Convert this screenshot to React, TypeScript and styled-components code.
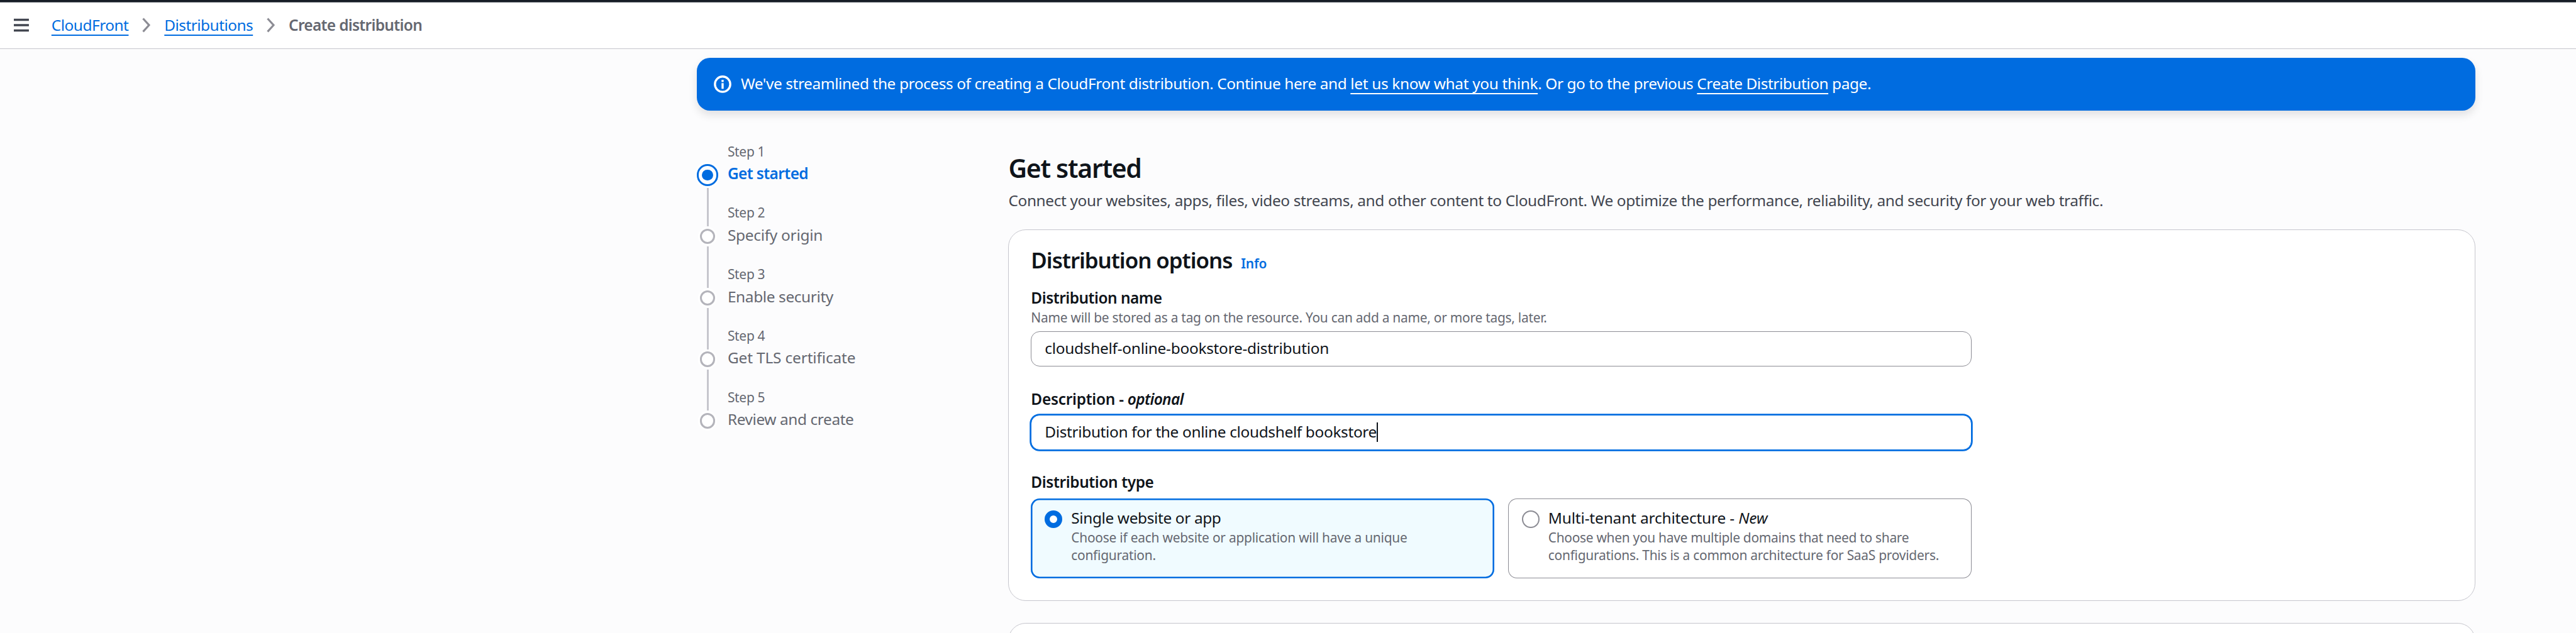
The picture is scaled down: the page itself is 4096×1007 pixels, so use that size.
import React from "react";
import styled, { createGlobalStyle, css } from "styled-components";

const SCALE = 0.9978;
const u = (n: number) => `${(n * SCALE).toFixed(2)}px`;

const color = {
  text: "#0f141a",
  secondary: "#424650",
  muted: "#656871",
  link: "#006ce0",
  page: "#fcfcfd",
  divider: "#c6c6cd",
  control: "#8c8c94",
  marker: "#b4b4bb",
  selected: "#f0fbff",
  nav: "#161d26",
};

const GlobalStyle = createGlobalStyle`
  *, *::before, *::after { box-sizing: border-box; }
  html, body { margin: 0; height: 1007px; overflow: hidden; background: ${color.page}; }
  body { font-family: "Noto Sans", "Open Sans", sans-serif; color: ${color.text}; }
  h1, h2, p { margin: 0; font-weight: inherit; }
`;

type Track = { $track?: number };
const track = css<Track>`letter-spacing: ${(p) => u(p.$track ?? -0.38)};`;

const bodyText = css<Track>`
  font-size: ${u(24.5)};
  line-height: ${u(35)};
  white-space: nowrap;
  ${track}
`;
const smallText = css<Track>`
  font-size: ${u(21)};
  line-height: ${u(28)};
  white-space: nowrap;
  letter-spacing: ${(p) => u(p.$track ?? -0.26)};
`;

const Shell = styled.div`
  display: flex;
  flex-direction: column;
  width: 4096px;
  height: 1007px;
  overflow: hidden;
`;
const NavEdge = styled.div`
  flex: none;
  height: 4px;
  background: ${color.nav};
  border-bottom: 1px solid #5a5f66;
`;
const Header = styled.header`
  flex: none;
  display: flex;
  align-items: flex-start;
  gap: ${u(36)};
  height: ${u(74)};
  padding: ${u(19)} 0 0 ${u(22)};
  background: #fff;
  border-bottom: 1px solid ${color.divider};
`;
const HeaderIcon = styled.svg`
  flex: none;
  display: block;
  height: ${u(24)};
  margin-top: ${u(5)};
`;
const Crumbs = styled.nav`
  display: flex;
  gap: ${u(22)};
`;
const underline = css`
  text-decoration: underline;
  text-decoration-thickness: 2px;
  text-underline-offset: ${u(6)};
  text-decoration-skip-ink: none;
`;
const Crumb = styled.a<Track>`
  ${bodyText}
  color: ${color.link};
  ${underline}
`;
const CurrentCrumb = styled.span<Track>`
  ${bodyText}
  font-weight: 650;
  color: ${color.muted};
`;

const Page = styled.main`
  flex: 1;
  display: flex;
  flex-direction: column;
  width: ${u(2835)};
  margin-left: ${u(1110)};
  padding-top: ${u(14)};
`;
const Banner = styled.div`
  flex: none;
  display: flex;
  gap: ${u(14.5)};
  height: ${u(84)};
  padding: ${u(24)} 0 0 ${u(28)};
  border-radius: ${u(21)};
  background: ${color.link};
  color: #fff;
  box-shadow: 0 7px 14px rgba(0, 7, 22, 0.11);
`;
const BannerIcon = styled.svg`
  flex: none;
  width: ${u(28)};
  height: ${u(28)};
  margin-top: ${u(4)};
`;
const BannerText = styled.p<Track>`
  ${bodyText}
`;
const BannerLink = styled.a<Track>`
  color: inherit;
  ${track}
  ${underline}
`;

const Columns = styled.div`
  flex: 1;
  display: flex;
`;
const Steps = styled.ol`
  flex: none;
  width: ${u(497)};
  margin: 0;
  padding: ${u(51)} 0 0;
  list-style: none;
`;
const Step = styled.li`
  display: flex;
  gap: ${u(14.5)};
  height: ${u(98)};
`;
const Rail = styled.div`
  display: flex;
  flex-direction: column;
  align-items: center;
  width: ${u(35)};
`;
const Line = styled.span<{ $height?: number; $hidden?: boolean }>`
  width: 3px;
  background: ${(p) => (p.$hidden ? "transparent" : color.divider)};
  ${(p) => (p.$height ? `flex: none; height: ${u(p.$height)};` : "flex: 1;")}
`;
const MarkerSlot = styled.span<{ $active?: boolean }>`
  flex: none;
  display: grid;
  place-items: center;
  height: ${(p) => u(p.$active ? 42 : 32)};
`;
const Marker = styled.span<{ $active?: boolean }>`
  display: grid;
  place-items: center;
  width: ${(p) => u(p.$active ? 35 : 24.6)};
  height: ${(p) => u(p.$active ? 35 : 24.6)};
  border: ${(p) => (p.$active ? `3px solid ${color.link}` : `3.4px solid ${color.marker}`)};
  border-radius: 50%;
  background: #fff;
  box-shadow: 0 0 0 3px #fff;
`;
const MarkerDot = styled.span`
  width: ${u(17.5)};
  height: ${u(17.5)};
  border-radius: 50%;
  background: ${color.link};
`;
const StepBody = styled.div`
  display: flex;
  flex-direction: column;
  gap: ${u(3.5)};
  padding-top: ${u(1.2)};
`;
const StepLabel = styled.span<Track>`
  ${smallText}
  color: ${color.muted};
`;
const StepName = styled.span<Track & { $active?: boolean }>`
  ${bodyText}
  color: ${(p) => (p.$active ? color.link : color.muted)};
  font-weight: ${(p) => (p.$active ? 650 : 400)};
`;

const Content = styled.section`
  flex: 1;
  display: flex;
  flex-direction: column;
  padding-top: ${u(65.5)};
`;
const Title = styled.h1`
  font-size: ${u(41)};
  line-height: ${u(52.5)};
  font-weight: 650;
  letter-spacing: ${u(-1.3)};
`;
const Subtitle = styled.p<Track>`
  ${bodyText}
  margin-top: ${u(9)};
  color: ${color.secondary};
`;
const Card = styled.div`
  flex: none;
  height: ${u(592.5)};
  margin-top: ${u(28)};
  padding: ${u(27)} ${u(35)} 0;
  border: 1px solid ${color.divider};
  border-radius: ${u(28)};
  background: #fff;
`;
const NextCard = styled(Card)`
  height: ${u(120)};
  margin-top: ${u(34.5)};
`;
const CardHead = styled.div`
  display: flex;
  align-items: baseline;
  gap: ${u(14)};
`;
const CardTitle = styled.h2`
  font-size: ${u(35)};
  line-height: ${u(42)};
  font-weight: 650;
  letter-spacing: ${u(-1.07)};
`;
const InfoLink = styled.a<Track>`
  ${smallText}
  font-weight: 600;
  color: ${color.link};
`;
const Field = styled.div<{ $gap: number }>`
  display: flex;
  flex-direction: column;
  width: ${u(1499)};
  margin-top: ${(p) => u(p.$gap)};
`;
const Label = styled.label<Track>`
  ${bodyText}
  font-weight: 620;
`;
const Optional = styled.em<Track>`
  ${track}
`;
const Hint = styled.span<Track>`
  ${smallText}
  color: ${color.muted};
`;
const InputBox = styled.div<Track & { $focus?: boolean }>`
  ${bodyText}
  display: flex;
  align-items: center;
  height: ${u(56)};
  margin-top: ${u(7)};
  padding-left: ${u(21)};
  border: 1px solid ${(p) => (p.$focus ? color.link : color.control)};
  border-radius: ${u(14)};
  background: #fff;
  box-shadow: ${(p) => (p.$focus ? `0 0 0 1.75px ${color.link}` : "none")};
`;
const Caret = styled.span`
  width: 2px;
  height: ${u(31)};
  background: ${color.text};
`;
const Tiles = styled.div`
  display: grid;
  grid-template-columns: 1fr 1fr;
  gap: ${u(21.5)};
  margin-top: ${u(7.5)};
`;
const Tile = styled.div<{ $selected?: boolean }>`
  display: flex;
  gap: ${u(14.2)};
  height: ${u(128)};
  padding: ${u(14.5)} ${u(21.8)};
  border-radius: ${u(14)};
  background: ${(p) => (p.$selected ? color.selected : "#fff")};
  box-shadow: inset 0 0 0 ${(p) => (p.$selected ? `2.6px ${color.link}` : `1px ${color.control}`)};
`;
const Radio = styled.span<{ $checked?: boolean }>`
  flex: none;
  width: ${u(28)};
  height: ${u(28)};
  margin-top: ${u(4.5)};
  border: ${(p) => (p.$checked ? `${u(8.4)} solid ${color.link}` : `2px solid ${color.control}`)};
  border-radius: 50%;
  background: #fff;
`;
const TileBody = styled.div`
  display: flex;
  flex-direction: column;
`;
const TileTitle = styled.span<Track>`
  ${bodyText}
`;

const steps = [
  { name: "Get started", active: true, track: -0.6 },
  { name: "Specify origin", track: -0.29 },
  { name: "Enable security", track: -0.39 },
  { name: "Get TLS certificate", track: -0.16 },
  { name: "Review and create", track: -0.42 },
];

const Chevron = () => (
  <HeaderIcon viewBox="0 0 13 24" fill="none" stroke={color.control} strokeWidth="3.2">
    <path d="M1.5 1.5 11 12 1.5 22.5" />
  </HeaderIcon>
);

export default function App() {
  return (
    <>
      <GlobalStyle />
      <Shell>
        <NavEdge />
        <Header>
          <HeaderIcon viewBox="0 0 24 24" stroke={color.secondary} strokeWidth="3.5">
            <path d="M0 3.5H24M0 12H24M0 20.5H24" />
          </HeaderIcon>
          <Crumbs>
            <Crumb $track={-0.5}>CloudFront</Crumb>
            <Chevron />
            <Crumb $track={-0.54}>Distributions</Crumb>
            <Chevron />
            <CurrentCrumb $track={-0.68}>Create distribution</CurrentCrumb>
          </Crumbs>
        </Header>
        <Page>
          <Banner>
            <BannerIcon viewBox="0 0 28 28" fill="none" stroke="#fff" strokeWidth="3.4">
              <circle cx="14" cy="14" r="12.2" />
              <path d="M14 12.3V21.2M14 7V10.6" />
            </BannerIcon>
            <BannerText $track={-0.42}>
              We've streamlined the process of creating a CloudFront distribution. Continue here and{" "}
              <BannerLink $track={-0.34}>let us know what you think</BannerLink>. Or go to the previous{" "}
              <BannerLink $track={-0.47}>Create Distribution</BannerLink> page.
            </BannerText>
          </Banner>
          <Columns>
            <Steps>
              {steps.map((s, i) => (
                <Step key={s.name}>
                  <Rail>
                    <Line $height={s.active ? 31 : 36} $hidden={i === 0} />
                    <MarkerSlot $active={s.active}>
                      <Marker $active={s.active}>{s.active && <MarkerDot />}</Marker>
                    </MarkerSlot>
                    <Line $hidden={i === steps.length - 1} />
                  </Rail>
                  <StepBody>
                    <StepLabel $track={-0.3}>{`Step ${i + 1}`}</StepLabel>
                    <StepName $active={s.active} $track={s.track}>
                      {s.name}
                    </StepName>
                  </StepBody>
                </Step>
              ))}
            </Steps>
            <Content>
              <Title>Get started</Title>
              <Subtitle $track={-0.393}>
                Connect your websites, apps, files, video streams, and other content to CloudFront. We optimize the
                performance, reliability, and security for your web traffic.
              </Subtitle>
              <Card>
                <CardHead>
                  <CardTitle>Distribution options</CardTitle>
                  <InfoLink $track={-0.2}>Info</InfoLink>
                </CardHead>
                <Field $gap={22}>
                  <Label $track={-0.5}>Distribution name</Label>
                  <Hint $track={-0.27}>
                    Name will be stored as a tag on the resource. You can add a name, or more tags, later.
                  </Hint>
                  <InputBox $track={-0.28}>cloudshelf-online-bookstore-distribution</InputBox>
                </Field>
                <Field $gap={35.2}>
                  <Label $track={-0.28}>
                    Description - <Optional $track={-0.7}>optional</Optional>
                  </Label>
                  <InputBox $focus $track={-0.36}>
                    Distribution for the online cloudshelf bookstore
                    <Caret />
                  </InputBox>
                </Field>
                <Field $gap={34.9}>
                  <Label $track={-0.4}>Distribution type</Label>
                  <Tiles>
                    <Tile $selected>
                      <Radio $checked />
                      <TileBody>
                        <TileTitle>Single website or app</TileTitle>
                        <Hint $track={-0.24}>Choose if each website or application will have a unique</Hint>
                        <Hint>configuration.</Hint>
                      </TileBody>
                    </Tile>
                    <Tile>
                      <Radio />
                      <TileBody>
                        <TileTitle $track={-0.16}>
                          Multi-tenant architecture - <em>New</em>
                        </TileTitle>
                        <Hint $track={-0.3}>Choose when you have multiple domains that need to share</Hint>
                        <Hint>configurations. This is a common architecture for SaaS providers.</Hint>
                      </TileBody>
                    </Tile>
                  </Tiles>
                </Field>
              </Card>
              <NextCard />
            </Content>
          </Columns>
        </Page>
      </Shell>
    </>
  );
}
